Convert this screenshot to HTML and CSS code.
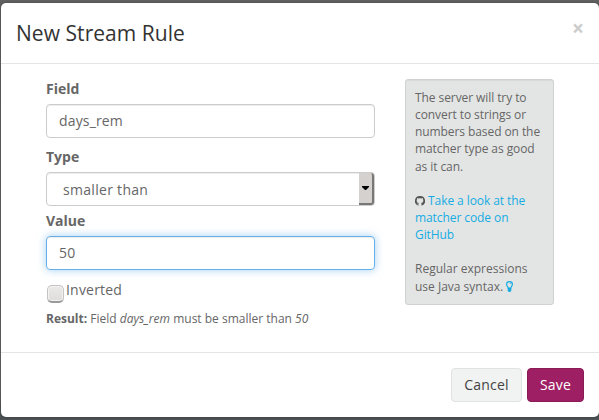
FILE: index.html
```html
<!DOCTYPE html>
<html lang="en">
<head>
<meta charset="utf-8">
<title>New Stream Rule</title>
<link rel="stylesheet" href="styles.css">
</head>
<body>
<div class="modal">
  <header class="modal-header">
    <h2>New Stream Rule</h2>
    <button class="close" type="button" aria-label="Close">×</button>
  </header>
  <div class="modal-body">
    <form class="rule-form">
      <label for="field">Field</label>
      <div class="control" id="field">days_rem</div>
      <label class="type-label">Type</label>
      <div class="control select"><span class="choice">smaller than</span><span class="drop"><svg width="7" height="4" viewBox="0 0 7 4"><path d="M0 0h7v1L4 4H3L0 1z"/></svg></span></div>
      <label class="value-label">Value</label>
      <div class="control focused">50</div>
      <div class="check"><span class="box"></span><span>Inverted</span></div>
      <p class="result"><strong>Result:</strong> Field <em>days_rem</em> must be smaller than <em>50</em></p>
    </form>
    <aside class="well">
      <p>The server will try to<br>convert to strings or<br>numbers based on the<br>matcher type as good<br>as it can.</p>
      <p><svg class="github" width="10" height="10" viewBox="0 0 10 10"><path d="M5 0A5 5 0 0 0 3.500 9.800V8.300C2.500 8.500 2 8.200 1.700 7.500c.8 0 .9.600 1.800.4.050-.4.200-.7.400-.9C2.400 6.800 1.700 6 1.700 4.600c0-.5.150-.9.450-1.300-.1-.4-.1-.9.100-1.300.5 0 .9.200 1.300.5q1.450-.3 2.900 0C6.850 2.200 7.250 2 7.750 2c.2.400.2.900.1 1.300.3.400.45.800.45 1.300C8.300 6 7.600 6.800 6.100 7c.3.300.4.600.4 1.100v1.700A5 5 0 0 0 5 0z"/></svg> <a>Take a look at the<br>matcher code on<br>GitHub</a></p>
      <p class="syntax">Regular expressions<br>use Java syntax. <svg class="bulb" width="7" height="11" viewBox="0 0 7 11"><path class="glass" d="M2.300 7.200C2.200 5.800.6 5.200.6 3.300a2.900 2.700 0 0 1 5.800 0C6.400 5.200 4.800 5.800 4.700 7.200z"/><path class="glass thin" d="M3.600 1.900q1.200 0 1.300 1.200"/><path class="base" d="M1.700 7h3.600v2.800L4.200 11H2.800L1.700 9.800z"/></svg></p>
    </aside>
  </div>
  <footer class="modal-footer">
    <button class="btn cancel" type="button">Cancel</button>
    <button class="btn primary" type="button">Save</button>
  </footer>
</div>
</body>
</html>
```
FILE: styles.css
```css
* { box-sizing: border-box; }
body {
  margin: 0;
  height: 420px;
  padding: 3px 0 3px 1px;
  overflow: hidden;
  background: linear-gradient(#626162 0, #656465 390px, #4b5154 415px);
  color: #666;
  font: 14px/20px "Open Sans", sans-serif;
}
.modal {
  display: flex;
  flex-direction: column;
  height: 414px;
  background: #fff;
  border-radius: 5px;
  box-shadow: 0 0 3px rgba(0, 0, 0, .3);
}
.modal-header {
  display: flex;
  justify-content: space-between;
  height: 61px;
  padding: 15px;
  border-bottom: 1px solid #e5e5e5;
}
h2 {
  margin: 0;
  color: #333;
  font-size: 21px;
  font-weight: 400;
  letter-spacing: .05px;
  line-height: 30px;
}
.close {
  height: 20px;
  padding: 0;
  border: 0;
  background: none;
  color: #ccc;
  font: bold 21px/18px "Open Sans", sans-serif;
}
.modal-body {
  display: flex;
  gap: 30px;
  height: 288px;
  padding: 15px 45px;
}
.rule-form { width: 329px; }
label {
  display: block;
  margin-bottom: 5px;
  font-weight: 700;
}
.type-label { margin-top: 9px; }
.value-label { margin-top: 5px; }
.control {
  display: flex;
  align-items: center;
  height: 34px;
  padding: 0 12px;
  border: 1px solid #ccc;
  border-radius: 4px;
  box-shadow: inset 0 1px 1px rgba(0, 0, 0, .075);
  letter-spacing: .15px;
}
.select {
  justify-content: space-between;
  padding: 0 0 0 16px;
  letter-spacing: .3px;
}
.choice { padding-top: 2px; }
.drop {
  display: flex;
  align-items: center;
  justify-content: center;
  width: 15px;
  height: 32px;
  border: solid #777;
  border-width: 0 2px 2px 0;
  border-radius: 0 3px 3px 0;
  background: #d5d1ce;
}
.drop path { fill: #000; }
.focused {
  border-color: #66afe9;
  box-shadow: inset 0 1px 1px rgba(0, 0, 0, .075), 0 0 8px rgba(102, 175, 233, .6);
}
.check {
  display: flex;
  gap: 2px;
  margin-top: 10px;
  padding-left: 1px;
  letter-spacing: .2px;
}
.box {
  width: 17px;
  height: 18px;
  margin-top: 5px;
  border: 1px solid #c4c3c2;
  border-bottom: 2px solid #999;
  border-radius: 5px;
  background: linear-gradient(#ebe9e8, #dfdcda);
  box-shadow: inset 0 0 0 1px #f4f3f2;
}
.result {
  margin: 6px 0 0;
  font-size: 12px;
}
.well {
  width: 149px;
  height: 226px;
  padding: 9px;
  border: 1px solid #cfd2d1;
  border-radius: 3px;
  background: #e3e5e4;
  box-shadow: inset 0 1px 1px rgba(0, 0, 0, .05);
  font-size: 12px;
  letter-spacing: -.08px;
  line-height: 17.14px;
  white-space: nowrap;
}
.well p { margin: 0 0 17.14px; }
.well .syntax { letter-spacing: 0; }
.well a { color: #16ace3; }
.github { fill: #555; vertical-align: -1px; }
.bulb { vertical-align: -1px; }
.glass { fill: none; stroke: #16ace3; stroke-width: 1.2; }
.thin { stroke-width: .7; }
.base { fill: #16ace3; }
.modal-footer {
  display: flex;
  justify-content: flex-end;
  gap: 5px;
  padding: 15px;
  border-top: 1px solid #e5e5e5;
}
.btn {
  width: 57px;
  height: 34px;
  padding: 0;
  border: 1px solid #dfe3e2;
  border-radius: 4px;
  background: #f1f2f2;
  color: #444;
  font: 14px/20px "Open Sans", sans-serif;
  letter-spacing: .2px;
}
.cancel { width: 71px; }
.primary {
  border-color: #891b55;
  background: #9e1f63;
  color: #fff;
}
```
